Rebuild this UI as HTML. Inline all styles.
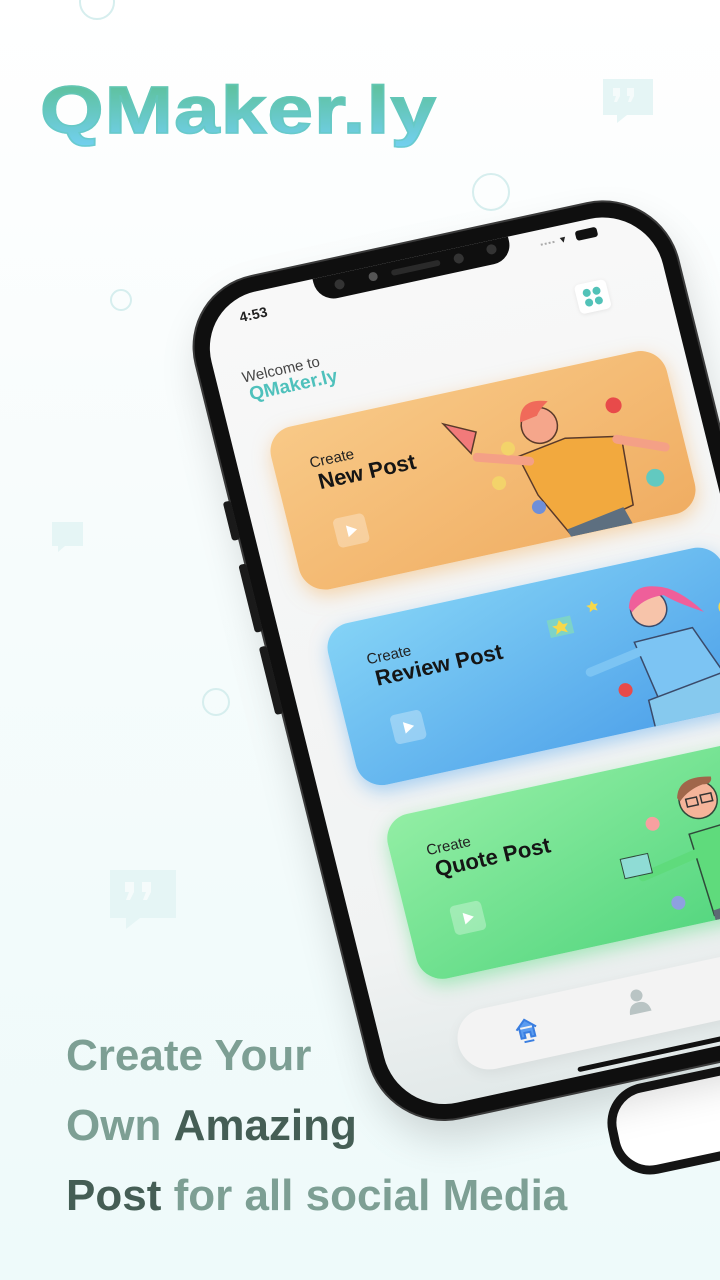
<!DOCTYPE html>
<html><head><meta charset="utf-8"><style>
*{margin:0;padding:0;box-sizing:border-box}
html{background:#f3fbfb}
body{width:720px;height:1280px;overflow:hidden;position:relative;font-family:"Liberation Sans",sans-serif;background:linear-gradient(180deg,#ffffff 0%,#f7fcfc 40%,#eefafa 100%)}
.abs{position:absolute}
.logo{left:40px;top:66px;font-size:67px;font-weight:bold;letter-spacing:1px;transform:scaleX(1.22);transform-origin:0 0;background:linear-gradient(180deg,#5fc2a2 25%,#72d0f0 90%);-webkit-background-clip:text;background-clip:text;color:transparent;line-height:90px;-webkit-text-stroke:1.5px rgba(100,200,190,.6)}
.tag{left:66px;font-size:44px;font-weight:bold;color:#7d9f94;line-height:50px}
.tag b{color:#455e55}
.phone{left:0;top:0;transform:matrix(0.977,-0.212,0.24,0.967,265,432);transform-origin:0 0}
.card{position:absolute;width:405px;height:168px;border-radius:26px;overflow:hidden}
.card .c{position:absolute;left:36px;top:32px;font-size:15px;color:#222}
.card .t{position:absolute;left:40px;top:48px;font-size:22px;font-weight:bold;color:#151515}
.card .p{position:absolute;left:44px;top:100px;width:32px;height:30px;border-radius:5px;background:rgba(255,255,255,.3)}
.card .p:after{content:"";position:absolute;left:12px;top:9px;border-left:10px solid #fff;border-top:6px solid transparent;border-bottom:6px solid transparent}
</style></head><body>
<svg class="abs" style="left:0;top:0" width="720" height="1280">
<g fill="none" stroke="#d6eeee" stroke-width="2">
<circle cx="97" cy="2" r="17"/><circle cx="491" cy="192" r="18"/><circle cx="121" cy="300" r="10"/><circle cx="216" cy="702" r="13"/>
</g>
<g fill="#e5f5f5">
<path d="M603 79h50v36h-26l-10 8v-8h-14z"/>
<path d="M52 522h31v24h-18l-7 6v-6h-6z"/>
<path d="M110 870h66v48h-36l-14 11v-11h-16z"/>
</g>
<g fill="#f5fbfb"><path d="M613 88h7v8l-3 6h-3l2-6h-3zM627 88h7v8l-3 6h-3l2-6h-3z"/><path d="M125 882h9v10l-4 8h-4l3-8h-4zM142 882h9v10l-4 8h-4l3-8h-4z"/></g>
</svg>
<div class="abs logo">QMaker.ly</div>

<div class="abs" style="left:600px;top:1092px;width:260px;height:92px;border:9px solid #151515;border-radius:40px;background:#fff;transform:rotate(-12deg);transform-origin:0 0"></div>

<div class="abs phone">
 <div class="abs" style="left:-50px;top:-155px;width:492px;height:869px;border-radius:74px;background:#0f0f0f;box-shadow:0 0 0 2px #3a3a3a,0 20px 40px rgba(0,0,0,.15)"></div>
 <div class="abs" style="left:-58px;top:60px;width:8px;height:40px;border-radius:3px;background:#1a1a1a"></div>
 <div class="abs" style="left:-58px;top:125px;width:8px;height:70px;border-radius:3px;background:#1a1a1a"></div>
 <div class="abs" style="left:-58px;top:210px;width:8px;height:70px;border-radius:3px;background:#1a1a1a"></div>
 <div class="abs" style="left:-35px;top:-140px;width:462px;height:839px;border-radius:60px;background:linear-gradient(180deg,#f8f8f8,#f1f3f3 80%,#e2e9e9);overflow:hidden">
  <div class="abs" style="left:118px;top:-2px;width:200px;height:26px;border-radius:0 0 20px 20px;background:#0f0f0f"></div>
  <div class="abs" style="left:138px;top:6px;width:10px;height:10px;border-radius:50%;background:#333"></div>
  <div class="abs" style="left:173px;top:6px;width:9px;height:9px;border-radius:50%;background:#555"></div>
  <div class="abs" style="left:196px;top:8px;width:50px;height:6px;border-radius:3px;background:#2a2a2a"></div>
  <div class="abs" style="left:260px;top:6px;width:10px;height:10px;border-radius:50%;background:#333"></div>
  <div class="abs" style="left:294px;top:4px;width:10px;height:10px;border-radius:50%;background:#333"></div>
  <div class="abs" style="left:38px;top:14px;font-size:14px;font-weight:bold;color:#222">4:53</div>
  <div class="abs" style="left:348px;top:14px;width:14px;height:3px;border-top:2px dotted #aaa"></div>
  <div class="abs" style="left:368px;top:8px;font-size:11px;color:#222">&#9662;</div>
  <div class="abs" style="left:384px;top:9px;width:22px;height:10px;border-radius:3px;background:#111"></div>
  <div class="abs" style="left:370px;top:62px;width:32px;height:30px;border-radius:5px;background:#fff;box-shadow:0 1px 4px rgba(0,0,0,.08)">
   <svg width="32" height="30"><g fill="#52c2b8"><circle cx="11" cy="10" r="4"/><circle cx="21" cy="10" r="4"/><circle cx="11" cy="20" r="4"/><circle cx="21" cy="20" r="4"/></g></svg>
  </div>
  <div class="abs" style="left:26px;top:74px;font-size:15px;color:#444">Welcome to</div>
  <div class="abs" style="left:29px;top:90px;font-size:19px;font-weight:bold;color:#4fc1bc">QMaker.ly</div>
 </div>

 <div class="card" style="left:0;top:0;background:linear-gradient(160deg,#f8c987,#f0ad62);box-shadow:0 6px 18px rgba(245,180,100,.5)">
  <div class="c">Create</div><div class="t">New Post</div><div class="p"></div>
  <svg class="abs" style="left:0;top:0" width="412" height="168">
   <path d="M240 78 L290 70 L345 80 L340 150 L272 165 L250 120 Z" fill="#f2a93e" stroke="#5a3a2a" stroke-width="1.5"/>
   <path d="M250 85 L200 70" stroke="#f4a086" stroke-width="9" stroke-linecap="round"/>
   <path d="M340 82 L385 100" stroke="#f4a086" stroke-width="9" stroke-linecap="round"/>
   <path d="M175 30 L205 45 L195 65 Z" fill="#f27a7a" stroke="#5a3a2a" stroke-width="1.5"/>
   <circle cx="268" cy="52" r="18" fill="#f5a68b" stroke="#5a3a2a" stroke-width="1.5"/>
   <path d="M250 45 Q255 20 282 30 Q272 36 268 42 Z" fill="#f06a5a"/>
   <path d="M270 160 L330 150 L335 168 L272 168 Z" fill="#5d6f80"/>
   <circle cx="232" cy="68" r="7" fill="#f3d36a"/><circle cx="215" cy="100" r="7" fill="#f3d36a"/>
   <circle cx="345" cy="48" r="8" fill="#e84a4a"/><circle cx="368" cy="128" r="9" fill="#62c9c0"/><circle cx="248" cy="132" r="7" fill="#6f8fd8"/>
  </svg>
 </div>
 <div class="card" style="left:8px;top:205px;height:167px;background:linear-gradient(160deg,#84d3f6,#4c9fe9);box-shadow:0 6px 18px rgba(90,170,240,.5)">
  <div class="c">Create</div><div class="t">Review Post</div><div class="p"></div>
  <svg class="abs" style="left:0;top:0" width="412" height="168">
   <path d="M300 80 L360 78 L380 130 L310 140 Z" fill="#7cc4f3" stroke="#3a4a6a" stroke-width="1.5"/>
   <path d="M305 90 L250 100" stroke="#7cc4f3" stroke-width="9" stroke-linecap="round"/>
   <path d="M300 140 L380 128 L395 175 L300 175 Z" fill="#86c9ee" stroke="#3a4a6a" stroke-width="1.5"/>
   <circle cx="322" cy="50" r="18" fill="#f7c4aa" stroke="#3a4a6a" stroke-width="1.5"/>
   <path d="M303 45 Q310 22 335 30 Q355 35 375 65 Q350 50 340 40 Q320 38 305 50Z" fill="#ef5f9a"/>
   <path d="M220 40 h24 v18 h-24z" fill="#7dd3c8"/><path d="M232 42 l3 5 5 0 -4 4 2 5 -6 -3 -6 3 2 -5 -4 -4 5 0z" fill="#f7d84a"/>
   <path d="M268 30 l2 4 4 0 -3 3 1 4 -4 -2 -4 2 1 -4 -3 -3 4 0z" fill="#f7d84a"/>
   <circle cx="280" cy="125" r="7" fill="#e84a4a"/><circle cx="398" cy="65" r="8" fill="#f7d84a"/>
  </svg>
 </div>
 <div class="card" style="left:20px;top:405px;height:170px;background:linear-gradient(160deg,#92eea4,#4fd47c);box-shadow:0 6px 18px rgba(90,220,130,.5)">
  <div class="c">Create</div><div class="t">Quote Post</div><div class="p"></div>
  <svg class="abs" style="left:0;top:0" width="412" height="170">
   <path d="M295 80 L360 75 L380 160 L300 165 Z" fill="#5fdb7c" stroke="#2f4a3a" stroke-width="1.5"/>
   <path d="M300 100 L240 112" stroke="#5fdb7c" stroke-width="9" stroke-linecap="round"/>
   <circle cx="312" cy="48" r="19" fill="#f5b49a" stroke="#2f4a3a" stroke-width="1.5"/>
   <path d="M292 42 Q298 20 330 28 Q330 36 320 34 Q305 36 294 46Z" fill="#a0664a"/>
   <rect x="300" y="45" width="11" height="8" fill="none" stroke="#333" stroke-width="1.5"/><rect x="315" y="44" width="11" height="8" fill="none" stroke="#333" stroke-width="1.5"/>
   <path d="M222 90 h28 v20 h-28z" fill="#8fdcd5" stroke="#2f4a3a"/>
   <circle cx="262" cy="62" r="7" fill="#f7a0a0"/><circle cx="268" cy="145" r="7" fill="#8ea0e0"/>
   <path d="M300 160 L370 152 L372 170 L300 170Z" fill="#5d6a74"/>
  </svg>
 </div>
 <div class="abs" style="left:40px;top:612px;width:470px;height:62px;border-radius:31px;background:#f3f3f3;box-shadow:0 4px 14px rgba(0,0,0,.06)">
  <svg class="abs" style="left:56px;top:16px" width="28" height="28"><path d="M4 13 L14 4 L24 13 M7 11 V22 H11 V17 H17 V22 H21 V11" fill="#5b9cf0" stroke="#3a7ee0" stroke-width="2"/><path d="M9 26 H19" stroke="#3a7ee0" stroke-width="2"/></svg>
  <svg class="abs" style="left:172px;top:12px" width="26" height="28"><circle cx="13" cy="8" r="6" fill="#b9c4c4"/><path d="M2 26 Q3 15 13 15 Q23 15 24 26Z" fill="#b9c4c4"/></svg>
 </div>
 <div class="abs" style="left:150px;top:690px;width:300px;height:5px;border-radius:3px;background:#111"></div>
</div>

<div class="abs tag" style="top:1031px">Create Your</div>
<div class="abs tag" style="top:1101px">Own <b>Amazing</b></div>
<div class="abs tag" style="top:1171px"><b>Post</b> for all social Media</div>
</body></html>
